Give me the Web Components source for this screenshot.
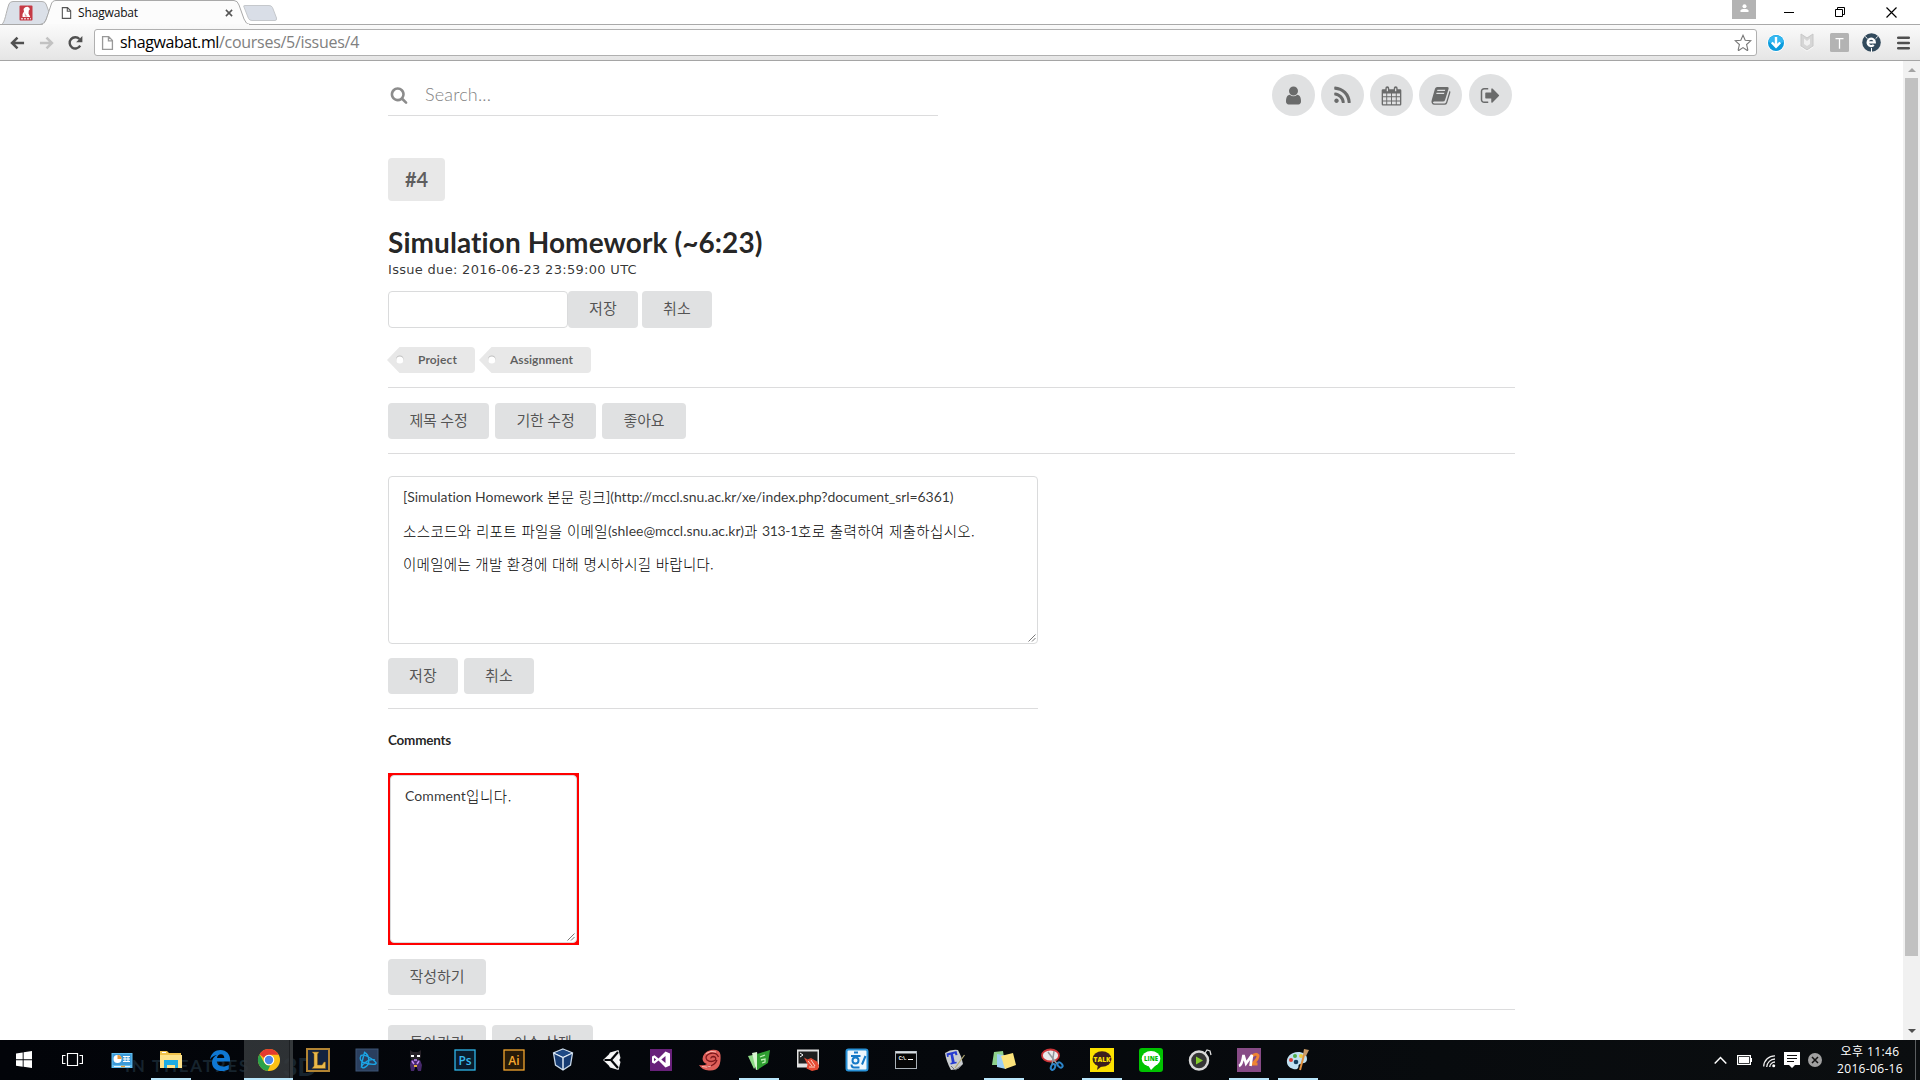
<!DOCTYPE html>
<html lang="ko">
<head>
<meta charset="utf-8">
<title>Shagwabat</title>
<style>
html,body{margin:0;padding:0;width:1920px;height:1080px;overflow:hidden;background:#fff}
body{display:flex;flex-direction:column;font-family:Lato,"Noto Sans CJK KR",sans-serif;color:rgba(0,0,0,.87)}
</style>
</head>
<body>
<browser-bar></browser-bar>
<page-view></page-view>
<task-bar></task-bar>
<script>
const FA = p => `<svg viewBox="0 0 1792 1792" fill="currentColor"><path d="${p}"/></svg>`;
const S = (body, vb = '0 0 24 24') => `<svg viewBox="${vb}" fill="none">${body}</svg>`;
const T = (x, y, size, fill, text, extra = '') => `<text x="${x}" y="${y}" font-size="${size}" fill="${fill}" text-anchor="middle" ${extra}>${text}</text>`;
const ICONS = {
  search: FA('M1216 832q0-185-131.5-316.5t-316.5-131.5-316.5 131.5-131.5 316.5 131.5 316.5 316.5 131.5 316.5-131.5 131.5-316.5zm512 832q0 52-38 90t-90 38q-54 0-90-38l-343-342q-179 124-399 124-143 0-273.5-55.5t-225-150-150-225-55.5-273.5 55.5-273.5 150-225 225-150 273.5-55.5 273.5 55.5 225 150 150 225 55.5 273.5q0 220-124 399l343 343q37 37 37 90z'),
  user: FA('M1536 1399q0 109-62.5 187t-150.5 78h-854q-88 0-150.5-78t-62.5-187q0-85 8.5-160.5t31.5-152 58.5-131 94-89 134.5-34.5q131 128 313 128t313-128q76 0 134.5 34.5t94 89 58.5 131 31.5 152 8.5 160.5zm-256-887q0 159-112.5 271.5t-271.5 112.5-271.5-112.5-112.5-271.5 112.5-271.5 271.5-112.5 271.5 112.5 112.5 271.5z'),
  rss: FA('M576 1344q0 80-56 136t-136 56-136-56-56-136 56-136 136-56 136 56 56 136zm512 123q2 28-17 48-18 21-47 21h-135q-25 0-43-16.5t-20-41.5q-22-229-184.5-391.5t-391.5-184.5q-25-2-41.5-20t-16.5-43v-135q0-29 21-47 17-17 43-17h5q160 13 306 80.5t259 181.5q114 113 181.5 259t80.5 306zm512 2q2 27-18 47-18 20-46 20h-143q-26 0-44.5-17.5t-19.5-42.5q-12-215-101-408.5t-231.5-336-336-231.5-408.5-102q-25-1-42.5-19.5t-17.5-43.5v-143q0-28 20-46 18-18 44-18h3q262 13 501.5 120t425.5 294q187 186 294 425.5t120 501.5z'),
  signout: FA('M704 1440q0 4 1 20t.5 26.5-3 23.5-10 19.5-20.5 6.5h-320q-119 0-203.5-84.5t-84.5-203.5v-704q0-119 84.5-203.5t203.5-84.5h320q13 0 22.5 9.5t9.5 22.5q0 4 1 20t.5 26.5-3 23.5-10 19.5-20.5 6.5h-320q-66 0-113 47t-47 113v704q0 66 47 113t113 47h312l11.5 1 11.5 3 8 5.5 7 9 2 13.5zm928-544q0 26-19 45l-544 544q-19 19-45 19t-45-19-19-45v-288h-448q-26 0-45-19t-19-45v-384q0-26 19-45t45-19h448v-288q0-26 19-45t45-19 45 19l544 544q19 19 19 45z'),
  calendar: S('<path fill="currentColor" fill-rule="evenodd" d="M2 4.5h2.6V3.2a2 2 0 0 1 4 0v1.300h4.800V3.200a2 2 0 0 1 4 0v1.300H20a1.300 1.300 0 0 1 1.300 1.300v14.400a1.300 1.300 0 0 1-1.300 1.300H2A1.300 1.300 0 0 1 .7 20.200V5.800A1.300 1.300 0 0 1 2 4.500zM2.100 9v2.900h3.400V9zm4.400 0v2.900h4V9zm5 0v2.900h4V9zm5 0v2.900h3.400V9zM2.100 12.900v3.300h3.400v-3.300zm4.400 0v3.300h4v-3.300zm5 0v3.300h4v-3.300zm5 0v3.300h3.400v-3.300zM2.100 17.200v2.900h3.400v-2.900zm4.400 0v2.900h4v-2.900zm5 0v2.900h4v-2.900zm5 0v2.900h3.400v-2.900zM6 3.300v3.200h1.300V3.300zm8.700 0v3.200H16V3.300z"/>', '0 0 22 22'),
  book: S('<path fill="currentColor" fill-rule="evenodd" d="M7.500 2h10.800q1.700 0 1.200 1.800l-3.700 12q-.5 1.600-2.300 1.600H4.200q-1.500.2-1 1.200.4.700 1.700.7h10.300q1.300 0 1.700-1.400l3.600-11.800q1.200.5.8 2l-3.300 10.700q-.7 2-2.800 2H4.800q-2.200 0-3-2-.6-1.400.1-3.400L5.200 4q.7-2 2.300-2zm.3 3-.4 1.300h8.200L16 5zm-.9 3-.4 1.300h8.200l.4-1.300z"/>', '0 0 22 22'),
  page: S('<path d="M1.700.7h6.600l4 4v9.600H1.700z M8 .7v4.500h4.300" stroke="currentColor" stroke-width="1.400" fill="#fff"/>', '0 0 14 15'),
  site: S('<rect width="13" height="15" x=".5" rx="1" fill="#c63a45"/><path d="M3.500 11.500Q3 8 5 6L4.500 3.500Q6 1 8.500 1.200 11 2 10.800 4L9.800 5l-.3 3 1.800 3.500z" fill="#fff"/><path d="M5.500 7q1 2 3 4H6z" fill="#c63a45" opacity=".5"/><path d="M2 13.300h10" stroke="#fff" stroke-dasharray="2 1"/>', '0 0 14 15'),
  x: S('<path d="m1 1 7 7M8 1 1 8" stroke="#555" stroke-width="1.700"/>', '0 0 9 9'),
  back: S('<path d="M15 7H2.500M8 1.300 2.200 7 8 12.700" stroke="currentColor" stroke-width="2.700"/>', '0 0 16 14'),
  fwd: S('<path d="M1 7h12.500M8 1.300 13.800 7 8 12.700" stroke="currentColor" stroke-width="2.700"/>', '0 0 16 14'),
  reload: S('<path d="M13 10.800a6 6 0 1 1-.8-7" stroke="#505050" stroke-width="2.500"/><path d="M15.300.6v6.600H8.700z" fill="#505050"/>', '0 0 16 16'),
  star: S('<path d="m9 1.300 2.200 5 5.500.5-4.100 3.700 1.200 5.400q-.1.800-.9.400L9 13.600l-3.900 2.700q-.8.400-.9-.4l1.200-5.400-4.100-3.700 5.500-.5z" stroke="#777" stroke-width="1.100" fill="#fff"/>', '0 0 18 18'),
  down: S('<circle cx="9" cy="9" r="8.900" fill="#fff"/><circle cx="9" cy="9" r="8" fill="#0b9bdc"/><path d="M1.200 8A8 8 0 0 1 17 8Q9 11 1.200 8z" fill="#33b7f1"/><path d="M9 3v9M4.800 8.500 9 12.700l4.200-4.200" stroke="#fff" stroke-width="2.400"/>', '0 0 18 18'),
  shield: S('<path d="m1 1 6 4 6-4v12l-6 4-6-4z" fill="#d6d6d6" stroke="#c8c8c8"/><path d="M4 5.500 7 8l3-2.500V11l-3 2-3-2z" fill="#f1f1f1"/><path d="m1 14 6 4 6-4" stroke="#fff" opacity=".6"/>', '0 0 14 19'),
  tbox: S('<rect width="19" height="19" rx="1.500" fill="#b3b3b3"/><path d="M5.500 5.700h8M9.500 5.700v10" stroke="#fff" stroke-width="1.300"/>', '0 0 19 19'),
  eico: S('<circle cx="9.500" cy="9.500" r="9.300" fill="#324a5c"/><path d="M6 9.300h6.800A3.600 3.700 0 1 0 11.800 12" stroke="#fff" stroke-width="2.200"/><path d="M9.500 15v4M3.200 3.500l2.300 2.200M15.800 3.500l-2.200 2.200" stroke="#fff"/>', '0 0 19 19'),
  menu: S('<path d="M1.200 1.800h10.600M1.200 7h10.600M1.200 12.200h10.600" stroke="#505050" stroke-width="2.500" stroke-linecap="round"/>', '0 0 13 14'),
  min: S('<path d="M0 5.500h10" stroke="#000"/>', '0 0 10 11'),
  restore: S('<path d="M.5 2.500h7v7h-7zM2.500 2.500v-2h7v7h-2" stroke="#000"/>', '0 0 10 10'),
  close: S('<path d="m.5.5 10 10M10.500.5l-10 10" stroke="#000" stroke-width="1.200"/>', '0 0 11 11'),
  person: S('<circle cx="4.500" cy="2.300" r="2" fill="#fff"/><path d="M.5 8V6.500Q1 5 3 5h3q2 0 2.500 1.500V8z" fill="#fff"/>', '0 0 9 8'),
  grip: S('<path d="m.5 7.500 7-7m-3.500 7L7.500 4" stroke="#555" stroke-width=".8"/>', '0 0 8 8'),

  win: S('<path d="M0 2.400 6.700 1.400v6.900H0zM7.600 1.300 16 0v8.300H7.600zM0 9.200h6.700v6.500L0 14.700zM7.600 9.200H16V17l-8.400-1.200z" fill="#fff"/>', '0 0 16 17'),
  taskview: S('<path d="M5.500 1.500h10v12h-10zM3.500 3.500h-3v8h3M17.500 3.500h3v8h-3" stroke="#fff" stroke-width="1.200"/>', '0 0 21 15'),
  monitor: S('<rect x="1.500" y="5" width="21" height="15" fill="#63bff0"/><rect x="2.500" y="6" width="19" height="11" fill="#3e9bd8"/><circle cx="7.500" cy="11" r="4" fill="#fff"/><path d="M7.500 11V7a4 4 0 0 1 4 4z" fill="#f09a36"/><path d="M13 8.500h7M13 11h7M13 13.500h7M15 8v6M18 8v6" stroke="#fff"/><path d="M4 18.500h16" stroke="#e8f4fb"/><path d="M11 18.500h4" stroke="#e7a13a" stroke-width="1.500"/>'),
  folder: S('<path d="M1 3h7l2 2h12v14H1z" fill="#f0c24c"/><path d="M1 7h22v13H1z" fill="#fde28a"/><path d="M5 12h14v8h-3v-3H8v3H5z" fill="#1dace4"/><path d="M3 4.500h4" stroke="#fff"/>'),
  edge: S('<path d="M2 11.500C3 5 7.500 2 12.500 2 18.500 2 22 6.500 22 11v2.500H8.800c.3 3.600 3.400 4.900 6.400 4.900 2.200 0 4-.6 5.600-1.500v4.300C19 22.300 16.500 23 14 23c-6 0-10-3.500-10-8.600 0-3.500 2-6 5-7.400C6 7.500 3.500 9 2 11.500zM9 10h7.300c0-2.500-1.300-3.800-3.400-3.800C10.800 6.200 9.300 7.700 9 10z" fill="#0f78d4"/>'),
  chrome: S('<circle cx="12" cy="12" r="11" fill="#fbc116"/><path d="M12 1a11 11 0 0 1 9.600 5.700H12a5.400 5.400 0 0 0-4.900 3.200L2.600 6.200A11 11 0 0 1 12 1z" fill="#e33b2e"/><path d="M2.500 6.300 7.300 14.700A5.400 5.400 0 0 0 13.300 17.200L10.600 23A11 11 0 0 1 2.500 6.300z" fill="#2ba24c"/><circle cx="12" cy="12" r="5.300" fill="#fff"/><circle cx="12" cy="12" r="4.200" fill="#4a86e8"/>'),
  lol: S('<rect x="1" y="1" width="22" height="22" fill="#14233f" stroke="#b28433" stroke-width="2"/><path d="M6 4h7l-1.500 2v11h4.500l2-3h1.500v6.500H6L8 18V6z" fill="#e9b84a" stroke="#7c5513" stroke-width=".5"/>'),
  bnet: S('<rect x="1" y="1" width="22" height="22" fill="#2a3f5f" stroke="#3c5474"/><path d="M6 7.500q3-1.500 10 3t4.500 5.500-10-1T6 7.500zM9.500 4.500q4 2 4.300 7.500T9.500 19.500 7.500 12t2-7.500zM20 12q-4-1.500-8.500 1.500T6 19.500" stroke="#1ba5e6" stroke-width="1.400"/>'),
  cat: S('<path d="M6 2l3 2h5l3-2v7l-2 3H8L6 9z" fill="#262128"/><path d="M7 7h3v2H7zm6 0h3v2h-3z" fill="#fff"/><path d="M7 12h9l2 5-1 6h-3l-2-6-2 6H7l-1-6z" fill="#47286b"/><path d="m8 13 2 3m5-3-2 3m-3-4h3" stroke="#c18af3" stroke-width="1.500"/><path d="M10 17h3v2h-3z" fill="#e9b23f"/>'),
  ps: S('<rect x="2" y="2" width="20" height="20" fill="#0a1c2c" stroke="#2fb5ea" stroke-width="1.300"/>' + T(12, 16.500, 12, '#37b9ee', 'Ps', 'font-weight="600"')),
  ai: S('<rect x="2" y="2" width="20" height="20" fill="#271a08" stroke="#f3a52e" stroke-width="1.300"/>' + T(12, 16.500, 12, '#f7a82f', 'Ai', 'font-weight="600"')),
  vbox: S('<path d="m12 1 9.500 4-2 12L12 22l-7.500-5-2-12z" fill="#163b72" stroke="#c7d8ea" stroke-width="1.300"/><path d="m3 5 9 4.500L21 5M12 9.500V22" stroke="#dce8f4" stroke-width="1.500"/><path d="m12 2 8 3-8 3.500L4 5z" fill="#1f4a86"/>'),
  unity: S('<path d="M18.500 2 10 4.500 8.800 6.500 3 12l5.800 5.500L10 19.500l8.500 2.500L20.500 14l-1.200-2 1.200-2z" fill="#f4f4f4"/><path d="m11 12 7-8M11 12H4.500M11 12l7 8" stroke="#05070a" stroke-width="2.200"/><path d="m8 10 6-5M8 14l6 5M18.300 8v8" stroke="#fff"/>'),
  vs: S('<path d="M1 1h22v22H1z" fill="#68217a"/><path d="m16.500 3.500 4.500 2v12l-4.500 2-7-7-4 3.200-2.500-1.300V8.600l2.500-1.300 4 3.200zM5 9.700v3.600L7.200 11.500zM16.500 8l-4.200 3.500 4.200 3.500z" fill="#fff" fill-rule="evenodd"/>'),
  shell: S('<path d="M1 17q5 1 8-1-4-1-4.500-5Q5 4 13 2q9-1 9.500 5 .5 7-1.500 11-3 5-10 4.500Q4 22 1 17z" fill="#df5f59"/><path d="M20.500 9q-2-5-8.500-3.500-6 2.500-3 6.500 4 3 8.500 0 1-3-2-3.500-3 .5-2.500 2M19 12q-2 5.500-10 7" stroke="#7c171b" stroke-width="1.300"/><path d="M8 5.500q5-3.500 10-1.500M4 18.500q5 1.500 9-.5" stroke="#ffb9b1"/>'),
  green: S('<path d="m1 8 5-1 3 11-2 3z" fill="#8fdb87"/><path d="m5 5 5-1 2 17-3 1z" fill="#d9f5d2"/><path d="m10 6 13-4-2 13-11 7z" fill="#2f9e31"/><path d="m13 9 5-2m-4 5 4-1v3l-3 1" stroke="#bff1b6" stroke-width="1.300"/>'),
  putty: S('<rect x="1" y="1.500" width="22" height="18" fill="#e1e1e1"/><rect x="2.500" y="3.500" width="19" height="12" fill="#1f1f1f"/><path d="m4 5 3 2-3 2" stroke="#fff"/><path d="m8 9.500 3.500 2L15 10l6 3.500 2 4-1 4-6 1.500-5.500-2.500 1-4z" fill="#e64b35"/><path d="m12 13 4 5m-1-6 4 6m-6 1h6" stroke="#fbd4c8"/>'),
  hangul: S('<rect x="1.500" y="1.500" width="21" height="21" rx="2" fill="#eef7fd" stroke="#2892d8" stroke-width="2"/><path d="M9 4.500h4M6 8h9.500" stroke="#1579c7" stroke-width="2"/><circle cx="10.500" cy="12.500" r="3" stroke="#1579c7" stroke-width="2"/><path d="M6.500 16.500q0 3 2.500 3h5.500M20.500 8 17 16.500" stroke="#1579c7" stroke-width="2"/>'),
  cmd: S('<rect x="1.500" y="3.500" width="21" height="17" fill="#050505" stroke="#aab1b7"/><path d="M2 4.500h20" stroke="#d7dde2" stroke-width="2"/>' + T(8.500, 12, 5, '#fff', 'C:\\.', 'font-weight="700"') + '<path d="M14 11.500h5" stroke="#fff"/>'),
  tt: S('<path d="M2 5q6-4 13-3 4 7 5 14l-5 5-7 1Q3 13 2 5z" fill="#c9cccf"/><path d="m3.500 5.500 10-2.500 1 4-2 .2-.6-1.700-1.900.4 1.700 8 1.800-.2.200 1.500-6 1.300-.4-1.500 1.600-.6L7.500 6.700l-2 .5.200 1.500-1.600.3z" fill="#263bd1"/><path d="m12 20 9.500-13" stroke="#b3aa72" stroke-width="1.200"/><path d="m8 18 4 4 6-4" stroke="#777"/>'),
  notes: S('<path d="m2 4 9-1 2 14H0z" fill="#8ed18c"/><path d="m5 6 11 2-2 13-9-2z" fill="#9bcff4"/><path d="m9 8 12-3 3 12-11 4z" fill="#fbe27a"/>'),
  snip: S('<ellipse cx="9.500" cy="7.500" rx="8.500" ry="6" fill="#e9e9ea" stroke="#cd3438" stroke-width="1.800"/><path d="m7 4 9 12M13 3l-2 14" stroke="#8f969b" stroke-width="1.500"/><ellipse cx="12" cy="19" rx="2" ry="3" transform="rotate(25 12 19)" stroke="#2c84c8" stroke-width="2"/><ellipse cx="19" cy="17" rx="2" ry="3" transform="rotate(-45 19 17)" stroke="#2c84c8" stroke-width="2"/>'),
  talk: S('<path d="M0 0h24v24H0z" fill="#fce100"/><ellipse cx="12" cy="11" rx="9.500" ry="7.800" fill="#3b1e1e"/><path d="m8 17-1 5 5-4z" fill="#3b1e1e"/>' + T(12, 13.600, 6.500, '#fce100', 'TALK', 'font-weight="900"')),
  line: S('<rect width="24" height="24" rx="3" fill="#00c300"/><ellipse cx="12" cy="10.800" rx="9.300" ry="7.700" fill="#fff"/><path d="m9 17 3 5 6-6z" fill="#fff"/>' + T(12, 13.200, 6, '#00b900', 'LINE', 'font-weight="900"')),
  gom: S('<circle cx="11" cy="12.500" r="9" fill="#353535" stroke="#d8d8d8" stroke-width="2.500"/><path d="m8 8.500 7 4-7 4z" fill="#84ce2c"/><path d="m17 5 2-3 3 1 1 4" stroke="#ddd" stroke-width="1.300"/>'),
  m2: S('<path d="M0 0h24v24H0z" fill="#874b86"/><path d="M15.500 8q3.500-3 5.500-.5.500 3-5.500 8.500h5" stroke="#ee8432" stroke-width="3"/><path d="M2 18q3-1 4.500-11l2.500 8.500L15 7l-1.500 11" stroke="#fff" stroke-width="2.600"/>'),
  paint: S('<path d="M12 4C5 4 0 9 1 15c1 5 7 7 10 6 3-2 0-4 3-5 4-1 7-1 7-5 0-5-4-7-9-7z" fill="#bfe0f1"/><circle cx="5" cy="12" r="2" fill="#df3f34"/><circle cx="9" cy="8" r="2" fill="#4eae49"/><circle cx="15" cy="8" r="2" fill="#eccb3d"/><circle cx="10" cy="14" r="2.300" fill="#14405f"/><path d="m14 22 4-15" stroke="#e08f3e" stroke-width="2"/><path d="m17 7 1-6 5 1-3 6z" fill="#c99a67"/>'),
  up: S('<path d="m.7 7.500 5.800-6 5.800 6" stroke="#fff" stroke-width="1.500"/>', '0 0 13 9'),
  battery: S('<rect x=".6" y=".6" width="12.800" height="8.800" stroke="#fff" stroke-width="1.200"/><path d="M2 2h10v6H2z" fill="#fff"/><path d="M14.500 3v4" stroke="#fff"/>', '0 0 15 10'),
  wifi: S('<path d="M.7 11.500A11 11 0 0 1 12 .8M3.700 12A8.500 8.500 0 0 1 12 4M6.700 12A5.500 5.500 0 0 1 12 7" stroke="#eee" stroke-width="1.300"/><circle cx="10.700" cy="10.700" r="1.500" fill="#fff"/>', '0 0 13 13'),
  notif: S('<path d="M0 0h16v13h-5l-3 3-3-3H0z" fill="#fff"/><path d="M3 3.500h10M3 6.500h10M3 9.500h7" stroke="#111" stroke-width="1.200"/>', '0 0 16 16'),
  cross: S('<circle cx="7" cy="7" r="7" fill="#a0a0a0"/><path d="m4 4 6 6m0-6-6 6" stroke="#111" stroke-width="1.500"/>', '0 0 14 14')
};

/* Base class: renders the subclass template into an open shadow root. */
class Base extends HTMLElement {
  connectedCallback() {
    if (this.shadowRoot) return;
    this.attachShadow({mode: 'open'}).innerHTML = this.render();
    this.ready && this.ready();
  }
  at(n, d = '') { return this.getAttribute(n) ?? d; }
}
const def = (n, c) => customElements.define(n, c);

def('x-icon', class extends Base {
  render() {
    const w = this.at('w', '24'), h = this.at('h', w);
    return `<style>:host{display:block;flex:none;width:${w}px;height:${h}px;font-family:"Open Sans","Noto Sans CJK KR",sans-serif}svg{display:block;width:100%;height:100%}</style>${ICONS[this.at('name')]}`;
  }
});

/* One line of text tracked to an exact width. */
def('fit-text', class extends Base {
  render() { return `<style>:host{display:block;flex:none;width:${this.at('w')}px;white-space:nowrap}span{display:inline-block;white-space:pre}</style><span><slot></slot></span>`; }
  ready() {
    const s = this.shadowRoot.querySelector('span'), n = this.textContent.length;
    const d = (this.at('w') - s.getBoundingClientRect().width) / n;
    s.style.letterSpacing = d.toFixed(3) + 'px';
  }
});

def('browser-bar', class extends Base {
  render() { return `<style>
:host{display:flex;flex-direction:column;height:61px;flex:none;font-family:"Open Sans","Noto Sans CJK KR",sans-serif;color:#111}
.tabs{position:relative;height:24px;display:flex}
.shape{position:absolute;left:0;top:0;width:1920px;height:25px;z-index:1}
.row{position:relative;z-index:2;display:flex;width:100%;height:24px}
.pin{padding:5px 0 0 19px;width:42px;box-sizing:content-box;height:19px}
.page{padding-top:6px;width:17px;color:#555}
fit-text{font-size:12px;line-height:25px}
.tx{margin:9px 0 0 87px}
.ctl{margin-left:auto;display:flex}
.av{width:24px;height:19px;background:#b3b3b3;display:flex;justify-content:center;padding-top:4px;box-sizing:border-box}
.c1{margin:7px 0 0 28px}.c2{margin:7px 0 0 41px}.c3{margin:7px 23px 0 41px}
.bar{height:37px;box-sizing:border-box;border-top:1px solid #b5b5b5;border-bottom:1px solid #a5a5a5;background:linear-gradient(#fafafa,#e5e5e5);display:flex;align-items:center;padding:0 10px 0 10px}
.omni{flex:none;width:1663px;height:27px;box-sizing:border-box;border:1px solid #b0b0b0;border-radius:3px;background:#fff;display:flex;align-items:center;margin-left:7px;padding:0 4px 0 6px}
.omni fit-text{font-size:16px;line-height:25px}
.star{margin-left:auto}
</style>
<div class="tabs"><svg class="shape" viewBox="0 0 1920 25"><path d="M1.500 24.500C5 23 6 12 9 4Q10 1.500 13 1.500H42Q45 1.500 46 4L49 12 44 24.500z" fill="#dbe0e8" stroke="#b2b2b2"/><path d="M244 7Q243 5.500 245 5.500H269Q271.500 5.500 272.500 7.500L276.500 18Q277 20.500 275 20.500H252Q249.500 20.500 248.500 18.500z" fill="#d9dee7" stroke="#c5c8cc"/><path d="M42 24.500Q45 24 46 20L51 5Q52 1 56 1H234Q237.500 1 239 5L244 19Q246 24.500 250 24.500z" fill="#fcfcfc"/><path d="M0 24.500H40Q44 24.500 46 20L51 5Q52 .5 56 .5H234Q237.500 .5 239 5L244 19Q246 24.500 250 24.500H1920" fill="none" stroke="#a9a9a9"/><path d="M43 24.500H249" stroke="#fafafa" stroke-width="1.500"/></svg>
<div class="row"><div class="pin"><x-icon name="site" w="14" h="16"></x-icon></div><div class="page"><x-icon name="page" w="11" h="14"></x-icon></div><fit-text w="60">Shagwabat</fit-text><x-icon class="tx" name="x" w="8"></x-icon>
<div class="ctl"><div class="av"><x-icon name="person" w="9" h="8"></x-icon></div><x-icon class="c1" name="min" w="10" h="11"></x-icon><x-icon class="c2" name="restore" w="10"></x-icon><x-icon class="c3" name="close" w="11"></x-icon></div></div></div>
<div class="bar"><x-icon name="back" w="15" h="14" style="color:#505050"></x-icon><x-icon name="fwd" w="15" h="14" style="color:#c2c2c2;margin-left:14px"></x-icon><x-icon name="reload" w="15" h="16" style="margin:0 4px 0 14px"></x-icon>
<div class="omni"><x-icon name="page" w="13" h="16" style="color:#999"></x-icon><fit-text w="99" style="margin-left:6px;color:#000">shagwabat.ml</fit-text><fit-text w="140" style="color:#808080">/courses/5/issues/4</fit-text><x-icon class="star" name="star" w="18"></x-icon></div>
<x-icon name="down" w="18" style="margin-left:10px"></x-icon><x-icon name="shield" w="14" h="19" style="margin-left:15px"></x-icon><x-icon name="tbox" w="19" style="margin-left:16px"></x-icon><x-icon name="eico" w="19" style="margin-left:13px"></x-icon><x-icon name="menu" w="13" h="14" style="margin-left:16px"></x-icon></div>`; }
});

def('ui-button', class extends Base {
  render() { return `<style>:host{display:flex;flex:none;justify-content:center;width:${this.at('w')}px;height:${this.at('h', '36')}px;background:#e0e1e2;border-radius:4px;color:rgba(0,0,0,.65);font:400 15px/34px Lato,"Noto Sans CJK KR",sans-serif}</style><fit-text w="${this.at('t')}">${this.textContent}</fit-text>`; }
});
def('ui-circle', class extends Base {
  render() { return `<style>:host{display:flex;align-items:center;justify-content:center;width:43px;height:42px;border-radius:50%;background:#e0e1e2;color:#6a6b6b}</style><x-icon name="${this.at('name')}" w="${this.at('s', '21')}"></x-icon>`; }
});
def('ui-divider', class extends Base {
  render() { return `<style>:host{display:block;height:1px;background:#dcdcdd}</style>`; }
});
def('tag-label', class extends Base {
  render() { return `<style>:host{display:flex;width:${this.at('w')}px;height:26px;color:rgba(0,0,0,.6);font:700 12px/26px Lato,sans-serif}
svg{flex:none;width:31px;height:26px}.b{flex:1;background:#e8e8e8;border-radius:0 4px 4px 0}</style>
<svg viewBox="0 0 31 26"><path d="M0 13 12.500 0H31v26H12.500z" fill="#e8e8e8"/><circle cx="12.800" cy="12" r="3.600" fill="#bdbdbd"/><circle cx="12.800" cy="12.900" r="3.500" fill="#fff"/></svg><div class="b"><fit-text w="${this.at('t')}">${this.textContent}</fit-text></div>`; }
});
def('text-area', class extends Base {
  render() { return `<style>:host{display:flex;flex-direction:column;position:relative;box-sizing:border-box;border:1px solid #dadbdc;border-radius:4px;background:#fff;padding:11px 14px;font-size:14px;line-height:17px;color:rgba(0,0,0,.8)}
.g{position:absolute;right:1px;bottom:1px}</style><slot></slot><x-icon class="g" name="grip" w="8"></x-icon>`; }
});

def('scroll-bar', class extends Base {
  render() { return `<style>:host{display:flex;flex-direction:column;align-items:center;width:17px;flex:none;background:#f1f1f1}
i{border:4px solid transparent;height:0}.u{border-bottom-color:#a3a3a3;border-top:0;margin:7px 0 6px}.t{width:13px;height:878px;background:#c1c1c1}.d{border-top-color:#505050;border-bottom:0;margin-top:73px}</style><i class="u"></i><div class="t"></div><i class="d"></i>`; }
});

def('page-view', class extends Base {
  render() { return `<style>
:host{display:flex;height:979px;flex:none;overflow:hidden;background:#fff}
main{flex:1;display:flex;flex-direction:column;align-items:flex-start;padding:13px 388px 0;overflow:hidden}
main>*{flex-shrink:0}
.top{display:flex;justify-content:space-between;align-items:flex-start;width:1124px}
.search{display:flex;align-items:center;width:550px;height:41px;border-bottom:1px solid #dcdcdd;color:#8c8c8c}
.search fit-text{color:#828282;font-size:18px;font-weight:300;line-height:38px;padding-bottom:2px}
.circles,.btns{display:flex;gap:6px}
.num{margin-top:42px;width:57px;height:43px;background:#e8e8e8;border-radius:4px;display:flex;justify-content:center;font:700 20px/43px Lato;color:rgba(0,0,0,.6)}
h1{margin:23px 0 0;font:700 28px/36px Lato}
.due{font:13px/18px "DejaVu Sans";margin-top:1px;color:rgba(0,0,0,.8)}
.form{display:flex;margin-top:12px;gap:0}
.in{width:178px;height:35px;border:1px solid #dadbdc;border-radius:4px}
.tags{display:flex;gap:4px;margin:19px 0 0 -1px}
ui-divider{width:1127px;margin:13px 0 15px}
ui-divider.s{width:650px}
.ln{height:33.600px;display:flex;align-items:flex-start}
.k{font-size:14.500px;font-family:"Noto Sans CJK KR",sans-serif;font-weight:300;color:#000}
.h{font:700 13.500px/18px Lato;margin-top:7px}
.red{margin-top:24px;background:#f00;padding:2px;width:187px;height:168px;display:flex}
.red text-area{width:187px;height:168px;padding-left:14px}
</style>
<main>
<div class="top"><div class="search"><x-icon name="search" w="18" style="margin-left:2px"></x-icon><fit-text w="66" style="margin-left:17px">Search...</fit-text></div>
<div class="circles"><ui-circle name="user"></ui-circle><ui-circle name="rss"></ui-circle><ui-circle name="calendar"></ui-circle><ui-circle name="book"></ui-circle><ui-circle name="signout" style="margin-left:1px"></ui-circle></div></div>
<div class="num"><fit-text w="23">#4</fit-text></div>
<h1><fit-text w="375">Simulation Homework (~6:23)</fit-text></h1>
<div class="due"><fit-text w="249">Issue due: 2016-06-23 23:59:00 UTC</fit-text></div>
<div class="form"><div class="in"></div><ui-button w="70" h="37" t="28" style="margin-right:4px;margin-left:0">저장</ui-button><ui-button w="70" h="37" t="28">취소</ui-button></div>
<div class="tags"><tag-label w="88" t="39">Project</tag-label><tag-label w="112" t="63">Assignment</tag-label></div>
<ui-divider style="margin-top:14px"></ui-divider>
<div class="btns"><ui-button w="101" t="58">제목 수정</ui-button><ui-button w="101" t="58">기한 수정</ui-button><ui-button w="84" t="41">좋아요</ui-button></div>
<ui-divider style="margin:14px 0 22px"></ui-divider>
<text-area style="width:650px;height:168px"><div class="ln"><fit-text w="144">[Simulation Homework </fit-text><fit-text class="k" w="59">본문 링크</fit-text><fit-text w="347">](http://mccl.snu.ac.kr/xe/index.php?document_srl=6361)</fit-text></div><div class="ln"><fit-text class="k" w="205">소스코드와 리포트 파일을 이메일</fit-text><fit-text w="136">(shlee@mccl.snu.ac.kr)</fit-text><fit-text class="k" w="18">과 </fit-text><fit-text w="36">313-1</fit-text><fit-text class="k" w="177">호로 출력하여 제출하십시오.</fit-text></div><div class="ln"><fit-text class="k" w="311">이메일에는 개발 환경에 대해 명시하시길 바랍니다.</fit-text></div></text-area>
<div class="btns" style="margin-top:14px"><ui-button w="70" t="28">저장</ui-button><ui-button w="70" t="28">취소</ui-button></div>
<ui-divider class="s" style="margin-top:14px"></ui-divider>
<div class="h"><fit-text w="63">Comments</fit-text></div>
<div class="red"><text-area><div class="ln"><fit-text w="61">Comment</fit-text><fit-text class="k" w="46">입니다.</fit-text></div></text-area></div>
<div class="btns" style="margin-top:14px"><ui-button w="98" t="55">작성하기</ui-button></div>
<ui-divider style="margin-top:14px"></ui-divider>
<div class="btns"><ui-button w="98" t="55">돌아가기</ui-button><ui-button w="101" t="58">이슈 삭제</ui-button></div>
</main><scroll-bar></scroll-bar>`; }
});

def('task-bar', class extends Base {
  render() {
    const names = 'monitor folder edge chrome lol bnet cat ps ai vbox unity vs shell green putty hangul cmd tt notes snip talk line gom m2 paint'.split(' ');
    const open = ['folder', 'green', 'notes', 'talk', 'm2', 'paint'];
    return `<style>
:host{display:flex;position:relative;height:40px;flex:none;background:linear-gradient(90deg,#020409,#05080c 50%,#0b0e10);font-family:"Open Sans","Noto Sans CJK KR",sans-serif;color:#fff}
.c{position:relative;width:49px;flex:none;display:flex;justify-content:center;align-items:center;height:39px;padding-bottom:1px;box-sizing:content-box}
.c.o{background:linear-gradient(#b9e6fb,#b9e6fb) center bottom/40px 2px no-repeat}
.c.a{background:linear-gradient(#b9e6fb,#b9e6fb) bottom/100% 2px no-repeat,linear-gradient(90deg,#34383bdd 45px,#1d2023 45px,#1d2023 46px,#34383b 46px)}
.w{position:absolute;left:125px;top:15px;display:flex;align-items:center;gap:33px;color:#16232d;font:700 17px/22px Lato}
.w b{font-size:25px}
.tray{margin-left:auto;display:flex;align-items:center;height:40px}
.clock{margin:0 12px 0 15px;display:flex;flex-direction:column;align-items:center;font-size:12px;line-height:17px;width:66px;padding-bottom:1px}
.e{width:4px;height:40px;border-left:1px solid #5b5e60}
</style><div class="w"><fit-text w="125">IN THEATRES</fit-text><b>3D</b></div>
<div class="c" style="width:48px"><x-icon name="win" w="16" h="17"></x-icon></div><div class="c"><x-icon name="taskview" w="21" h="15"></x-icon></div>
${names.map(n => `<div class="c ${open.includes(n) ? 'o' : n === 'chrome' ? 'a' : ''}"><x-icon name="${n}" w="24"></x-icon></div>`).join('')}
<div class="tray"><x-icon name="up" w="13" h="9"></x-icon><x-icon name="battery" w="15" h="10" style="margin-left:10px"></x-icon><x-icon name="wifi" w="13" style="margin:2px 0 0 11px"></x-icon><x-icon name="notif" w="16" style="margin-left:8px"></x-icon><x-icon name="cross" w="14" style="margin-left:8px"></x-icon>
<div class="clock"><fit-text w="59">오후 11:46</fit-text><fit-text w="66">2016-06-16</fit-text></div><div class="e"></div></div>`;
  }
});
</script>
</body>
</html>
